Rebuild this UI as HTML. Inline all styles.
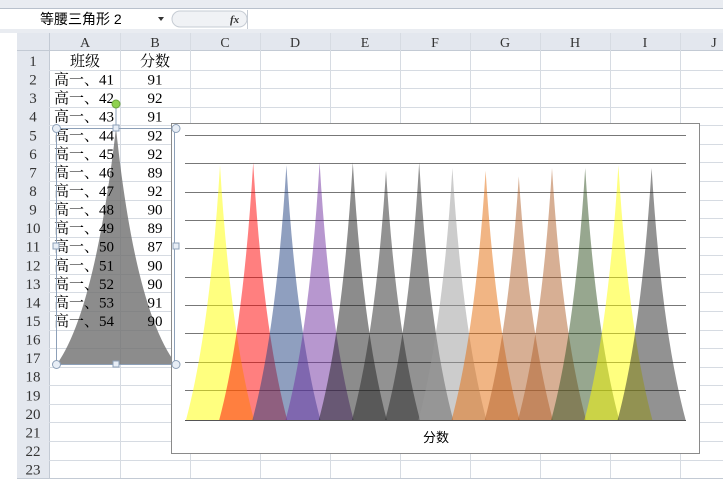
<!DOCTYPE html><html><head><meta charset="utf-8"><style>
body{margin:0;width:723px;height:489px;overflow:hidden;background:#fff;font-family:"Liberation Serif","Noto Serif CJK SC","Noto Sans CJK SC",serif;}
</style></head><body>
<svg width="723" height="489" xmlns="http://www.w3.org/2000/svg" style="position:absolute;left:0;top:0">
<rect x="0" y="0" width="723" height="9" fill="#e9ecf1"/>
<line x1="0" y1="8.5" x2="723" y2="8.5" stroke="#b9c1cc"/>
<line x1="0" y1="29.5" x2="723" y2="29.5" stroke="#b9c1cc"/>
<rect x="0" y="29" width="723" height="4" fill="#e9ecf1"/>
<text x="40" y="24" font-size="14" font-family="Liberation Sans,Noto Sans CJK SC,sans-serif" fill="#000">等腰三角形 2</text>
<path d="M158 17 l6 0 l-3 4z" fill="#333"/>
<rect x="172" y="11" width="75" height="16" rx="8" fill="#f0f2f5" stroke="#c6ccd4"/>
<text x="230" y="23" font-size="11" font-style="italic" font-weight="bold" fill="#333">fx</text>
<line x1="247.5" y1="10" x2="247.5" y2="29" stroke="#c6ccd4"/>
<rect x="17" y="33" width="706" height="18" fill="#e3e7ee"/>
<rect x="17" y="33" width="32" height="445" fill="#e3e7ee"/>
<g stroke="#c3cad4">
<line x1="17" y1="50.5" x2="723" y2="50.5"/>
<line x1="49.5" y1="33" x2="49.5" y2="478"/>
</g>
<g font-size="14" fill="#333" text-anchor="middle">
<text x="85" y="47">A</text><text x="155" y="47">B</text><text x="225" y="47">C</text><text x="295" y="47">D</text><text x="365" y="47">E</text><text x="435" y="47">F</text><text x="505" y="47">G</text><text x="575" y="47">H</text><text x="645" y="47">I</text><text x="714" y="47">J</text>
</g>
<g stroke="#d6dbe2">
<line x1="120.5" y1="33" x2="120.5" y2="478"/><line x1="190.5" y1="33" x2="190.5" y2="478"/><line x1="260.5" y1="33" x2="260.5" y2="478"/><line x1="330.5" y1="33" x2="330.5" y2="478"/><line x1="400.5" y1="33" x2="400.5" y2="478"/><line x1="470.5" y1="33" x2="470.5" y2="478"/><line x1="540.5" y1="33" x2="540.5" y2="478"/><line x1="610.5" y1="33" x2="610.5" y2="478"/><line x1="680.5" y1="33" x2="680.5" y2="478"/>
</g>
<g id="rows"></g>
<rect x="17" y="478" width="706" height="11" fill="#fff"/>
<line x1="17" y1="478.5" x2="723" y2="478.5" stroke="#c3cad4"/>
<path d="M57 364 Q95 310 116 128 Q135 310 176 364 Z" fill="#6f6f6f" fill-opacity="0.8"/>
<g id="cells" font-size="15" fill="#000"></g>
<rect x="56.5" y="128.5" width="119" height="236" fill="none" stroke="#8da0b8"/>
<g fill="#e8eef6" stroke="#8da0b8">
<circle cx="56.5" cy="128.5" r="4"/><circle cx="176" cy="128.5" r="4"/><circle cx="56.5" cy="364.5" r="4"/><circle cx="176" cy="364.5" r="4"/>
<rect x="113" y="125" width="6" height="6"/><rect x="113" y="361" width="6" height="6"/><rect x="53" y="243" width="6" height="6"/>
</g>
<line x1="116" y1="104" x2="116" y2="125" stroke="#8da0b8"/>
<circle cx="116" cy="104" r="4" fill="#8fd14f" stroke="#6aa33a"/>
<rect x="171.5" y="123.5" width="528" height="330" fill="#fff" stroke="#8a8a8a"/>
<g stroke="#777" stroke-width="1">
<line x1="185" y1="135.5" x2="686" y2="135.5"/><line x1="185" y1="163.5" x2="686" y2="163.5"/><line x1="185" y1="192.5" x2="686" y2="192.5"/><line x1="185" y1="220.5" x2="686" y2="220.5"/><line x1="185" y1="248.5" x2="686" y2="248.5"/><line x1="185" y1="277.5" x2="686" y2="277.5"/><line x1="185" y1="305.5" x2="686" y2="305.5"/><line x1="185" y1="333.5" x2="686" y2="333.5"/><line x1="185" y1="362.5" x2="686" y2="362.5"/><line x1="185" y1="390.5" x2="686" y2="390.5"/>
</g>
<g id="tri" fill-opacity="0.5"></g>
<line x1="185" y1="420.5" x2="686" y2="420.5" stroke="#555"/>
<text x="436" y="442" font-size="13" text-anchor="middle" font-family="Liberation Sans,Noto Sans CJK SC,sans-serif">分数</text>
<g stroke="#8da0b8" fill="#e8eef6">
<line x1="174.5" y1="128" x2="174.5" y2="364"/>
<rect x="173" y="243" width="6" height="6"/>
<circle cx="176" cy="128.5" r="4"/><circle cx="176" cy="364.5" r="4"/>
</g>
</svg>
<script>
var ns="http://www.w3.org/2000/svg",rows=document.getElementById('rows'),cells=document.getElementById('cells');
var A=["班级","高一、41","高一、42","高一、43","高一、44","高一、45","高一、46","高一、47","高一、48","高一、49","高一、50","高一、51","高一、52","高一、53","高一、54"];
var B=["分数","91","92","91","92","92","89","92","90","89","87","90","90","91","90"];
var h=18.57;
function t(x,y,s,a,fs,col,p){var e=document.createElementNS(ns,'text');e.setAttribute('x',x);e.setAttribute('y',y);e.setAttribute('text-anchor',a);e.setAttribute('font-size',fs);if(col)e.setAttribute('fill',col);e.textContent=s;p.appendChild(e);}
for(var i=0;i<23;i++){var y=51+h*(i+1);var l=document.createElementNS(ns,'line');l.setAttribute('x1',49);l.setAttribute('x2',723);l.setAttribute('y1',Math.round(y)+.5);l.setAttribute('y2',Math.round(y)+.5);l.setAttribute('stroke','#d6dbe2');rows.appendChild(l);
t(33,51+h*i+15,String(i+1),'middle',15,'#333',rows);
if(i<15){if(i==0)t(85,51+h*i+15,A[i],'middle',15,null,cells);else t(54,51+h*i+15,A[i],'start',15,null,cells);t(155,51+h*i+15,B[i],'middle',15,null,cells);}}
var cols=["#ffff00","#ff0000","#1f3f7f","#7030a0","#1a1a1a","#262626","#262626","#9a9a9a","#e46c0a","#b0602a","#b0602a","#2f4f1f","#ffff00","#262626"];
var v=[91,92,91,92,92,89,92,90,89,87,90,90,91,90],tri=document.getElementById('tri');
for(var k=0;k<14;k++){var cx=220+33.2*k,py=420-v[k]*2.8;var p=document.createElementNS(ns,'path');
p.setAttribute('d','M'+(cx-34)+' 420 Q'+(cx-10)+' 330 '+cx+' '+py+' Q'+(cx+10)+' 330 '+(cx+34)+' 420Z');p.setAttribute('fill',cols[k]);tri.appendChild(p);}
</script>
</body></html>
